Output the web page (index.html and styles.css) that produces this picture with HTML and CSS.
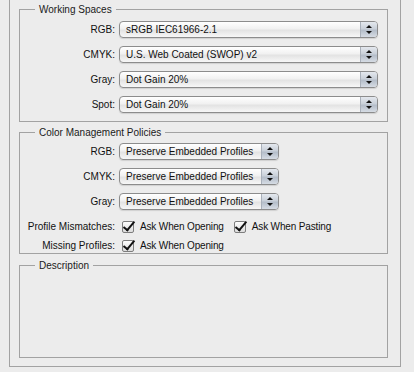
FILE: index.html
```html
<!DOCTYPE html>
<html lang="en">
<head>
    <meta charset="UTF-8">
    <title>Color Settings</title>
    <link rel="stylesheet" href="styles.css">
</head>
<body>
    <div class="window">
        <div class="panel">
            <fieldset class="group working">
                <legend>Working Spaces</legend>
                <div class="rows">
                    <span class="label">RGB:</span>
                    <div class="popup wide"><span class="value">sRGB IEC61966-2.1</span><span class="arrows"></span></div>
                    <span class="label">CMYK:</span>
                    <div class="popup wide"><span class="value">U.S. Web Coated (SWOP) v2</span><span class="arrows"></span></div>
                    <span class="label">Gray:</span>
                    <div class="popup wide"><span class="value">Dot Gain 20%</span><span class="arrows"></span></div>
                    <span class="label">Spot:</span>
                    <div class="popup wide"><span class="value">Dot Gain 20%</span><span class="arrows"></span></div>
                </div>
            </fieldset>

            <fieldset class="group policies">
                <legend>Color Management Policies</legend>
                <div class="rows">
                    <span class="label">RGB:</span>
                    <div class="popup"><span class="value">Preserve Embedded Profiles</span><span class="arrows"></span></div>
                    <span class="label">CMYK:</span>
                    <div class="popup"><span class="value">Preserve Embedded Profiles</span><span class="arrows"></span></div>
                    <span class="label">Gray:</span>
                    <div class="popup"><span class="value">Preserve Embedded Profiles</span><span class="arrows"></span></div>
                </div>
                <div class="checks">
                    <span class="label">Profile Mismatches:</span>
                    <div class="options">
                        <label class="check"><span class="box"></span>Ask When Opening</label>
                        <label class="check"><span class="box"></span>Ask When Pasting</label>
                    </div>
                    <span class="label">Missing Profiles:</span>
                    <div class="options">
                        <label class="check"><span class="box"></span>Ask When Opening</label>
                    </div>
                </div>
            </fieldset>

            <fieldset class="group description">
                <legend>Description</legend>
            </fieldset>
        </div>
    </div>
</body>
</html>
```

FILE: styles.css
```css
body {
    margin: 0;
    background: #fff;
    font-family: "Lucida Grande", "Liberation Sans", Arial, sans-serif;
    font-size: 10px;
    color: #111;
}
.window {
    background: #ececec;
    height: 372px;
    padding-left: 9px;
    box-sizing: border-box;
}
.panel {
    width: 392px;
    height: 367px;
    box-sizing: border-box;
    border: 1px solid #a2a2a2;
    border-top: none;
    padding: 3px 12px 0 9px;
}
.group {
    margin: 0;
    padding: 0;
    border: 1px solid #a2a2a2;
    min-width: 0;
}
.group legend {
    margin-left: 15px;
    padding: 0 4px;
    line-height: 13px;
    color: #1a1a1a;
}
.working {
    height: 119px;
    box-sizing: border-box;
}
.policies {
    margin-top: 4px;
    height: 128px;
    box-sizing: border-box;
}
.description {
    margin-top: 5px;
    height: 99px;
    box-sizing: border-box;
}
.rows {
    display: grid;
    grid-template-columns: 95px auto;
    column-gap: 4px;
    row-gap: 8px;
    align-items: center;
    justify-items: start;
}
.working .rows {
    padding-top: 5px;
}
.policies .rows {
    padding-top: 4px;
}
.label {
    justify-self: end;
    text-align: right;
    white-space: nowrap;
}
.popup {
    display: flex;
    align-items: stretch;
    width: 160px;
    height: 17px;
    box-sizing: border-box;
    border: 1px solid #8c8c8c;
    border-radius: 4px;
    background: linear-gradient(#ffffff, #f1f1f1 45%, #e3e3e3 55%, #f7f7f7);
    box-shadow: 0 1px 1px rgba(0,0,0,0.12);
    overflow: hidden;
}
.popup.wide {
    width: 259px;
}
.value {
    flex: 1;
    padding-left: 6px;
    line-height: 15px;
    white-space: nowrap;
}
.arrows {
    width: 16px;
    border-left: 1px solid #a9b0ba;
    background: linear-gradient(#e4e8ee, #c9d0d9 45%, #b4bdc9 55%, #d6dce4);
    position: relative;
}
.arrows::before,
.arrows::after {
    content: "";
    position: absolute;
    left: 5px;
    border-left: 3px solid transparent;
    border-right: 3px solid transparent;
}
.arrows::before {
    top: 3px;
    border-bottom: 3px solid #111;
}
.arrows::after {
    top: 9px;
    border-top: 3px solid #111;
}
.checks {
    display: grid;
    grid-template-columns: 95px auto;
    column-gap: 7px;
    row-gap: 6px;
    align-items: center;
    padding-top: 10px;
}
.options {
    display: flex;
    gap: 10px;
    white-space: nowrap;
    letter-spacing: -0.15px;
}
.check {
    display: flex;
    align-items: center;
    gap: 6px;
    height: 13px;
}
.box {
    width: 12px;
    height: 12px;
    box-sizing: border-box;
    border: 1px solid #7d7d7d;
    border-radius: 2px;
    background: linear-gradient(#fdfdfd, #dcdcdc);
    position: relative;
}
.box::after {
    content: "";
    position: absolute;
    left: 3px;
    top: -3px;
    width: 4px;
    height: 10px;
    border-right: 2px solid #111;
    border-bottom: 2px solid #111;
    transform: rotate(40deg);
}
```
